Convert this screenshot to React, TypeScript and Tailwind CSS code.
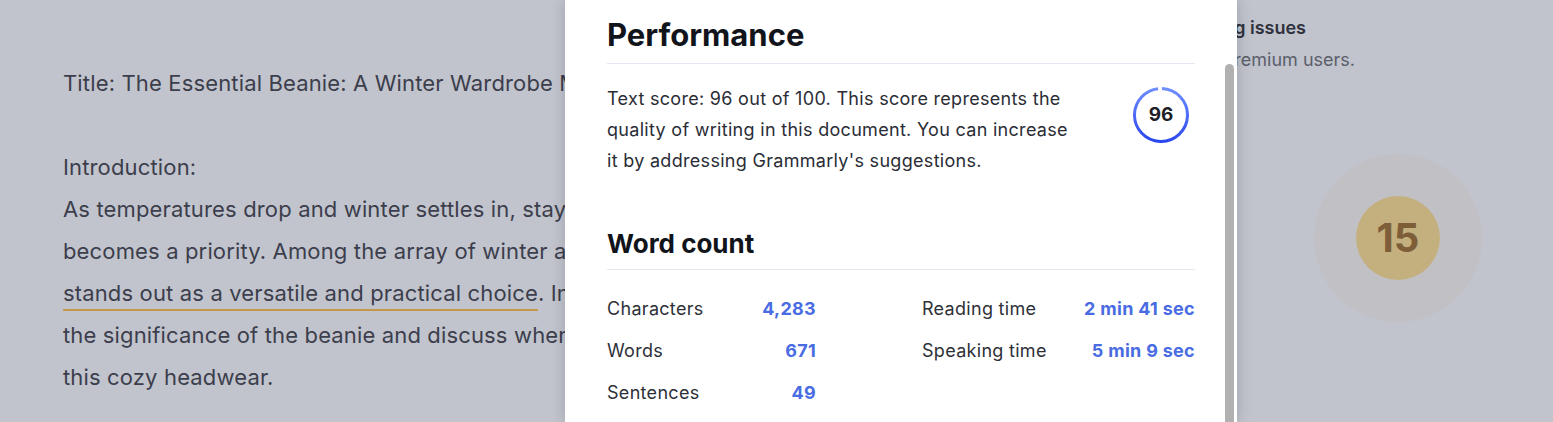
import React from "react";

const docLines = [
  "Title: The Essential Beanie: A Winter Wardrobe Must-Have",
  "",
  "Introduction:",
  "As temperatures drop and winter settles in, staying warm and stylish",
  "becomes a priority. Among the array of winter accessories, the beanie",
];

const ScoreRing: React.FC<{ score: number }> = ({ score }) => {
  const r = 26.5;
  const c = 2 * Math.PI * r;
  const len = c * 0.97;
  return (
    <div className="relative w-[56px] h-[56px] shrink-0">
      <svg width="56" height="56" viewBox="0 0 56 56" className="absolute inset-0">
        <defs>
          <linearGradient id="ring" x1="0" y1="0" x2="1" y2="0">
            <stop offset="0%" stopColor="#2a47ee" />
            <stop offset="100%" stopColor="#6f8eff" />
          </linearGradient>
        </defs>
        <circle
          cx="28"
          cy="28"
          r={r}
          fill="none"
          stroke="url(#ring)"
          strokeWidth="3"
          strokeDasharray={`${len} ${c}`}
          transform="rotate(-88 28 28)"
        />
      </svg>
      <div className="absolute inset-0 flex items-center justify-center text-[19px] font-bold text-[#1e1f28]">
        {score}
      </div>
    </div>
  );
};

const Stat: React.FC<{ label: string; value: string; w: string }> = ({ label, value, w }) => (
  <div className={`flex justify-between ${w}`}>
    <span className="text-[#2e3038]">{label}</span>
    <span className="font-bold text-[#4a6ce2]">{value}</span>
  </div>
);

const App: React.FC = () => {
  return (
    <div
      className="relative w-full h-[422px] overflow-hidden bg-[#c1c4cd]"
      style={{ fontFamily: "Inter, 'Noto Sans', sans-serif" }}
    >
      {/* page behind the overlay */}
      <div className="flex">
        <div className="w-[1140px] shrink-0 pl-[63px] pt-[62px] text-[22px] leading-[42px] tracking-[0.15px] text-[#3c3e4c] whitespace-nowrap">
          {docLines.map((l, i) => (
            <div key={i} className="h-[42px]">{l}</div>
          ))}
          <div>
            <span className="underline decoration-[#c4974a] decoration-2 underline-offset-[8px]">
              stands out as a versatile and practical choice
            </span>
            . In this article, we'll explore
          </div>
          <div>the significance of the beanie and discuss when and how to wear</div>
          <div>this cozy headwear.</div>
        </div>

        <div className="flex-1 pt-[12px] leading-[32px] text-[18px] whitespace-nowrap">
          <div className="w-[166px] flex justify-end font-semibold text-[#30323d]">
            Advanced writing issues
          </div>
          <div className="w-[215px] flex justify-end text-[#5b5e6b]">Available for Premium users.</div>
          <div className="ml-[174px] mt-[78px] w-[168px] h-[168px] rounded-full bg-[#c1c0c4] flex items-center justify-center">
            <div className="w-[84px] h-[84px] rounded-full bg-[#c4b07f] flex items-center justify-center text-[40px] font-bold text-[#7d5e38]">
              15
            </div>
          </div>
        </div>
      </div>

      {/* modal */}
      <div className="absolute left-[565px] top-0 w-[672px] h-[422px] bg-white shadow-[0_0_14px_rgba(0,0,0,0.18)]">
        <div className="px-[42px] pt-[17px]">
          <h2 className="text-[31px] leading-[36px] font-bold text-[#12141b] pb-[10px] border-b border-[#e6e7f0]">
            Performance
          </h2>
          <div className="flex justify-between mt-[19px]">
            <div className="text-[18px] leading-[31px] tracking-[0.3px] text-[#2b2d36] whitespace-nowrap">
              <div>Text score: 96 out of 100. This score represents the</div>
              <div>quality of writing in this document. You can increase</div>
              <div>it by addressing Grammarly's suggestions.</div>
            </div>
            <div className="mt-[4px] mr-[6px]">
              <ScoreRing score={96} />
            </div>
          </div>

          <h2 className="mt-[53px] text-[26px] leading-[30px] font-bold text-[#12141b] pb-[10px] border-b border-[#e6e7f0]">
            Word count
          </h2>
          <div className="mt-[18px] flex justify-between text-[18px] leading-[42px] tracking-[0.3px]">
            <div className="w-[209px]">
              <Stat label="Characters" value="4,283" w="w-[209px]" />
              <Stat label="Words" value="671" w="w-[209px]" />
              <Stat label="Sentences" value="49" w="w-[209px]" />
            </div>
            <div className="w-[273px]">
              <Stat label="Reading time" value="2 min 41 sec" w="w-[273px]" />
              <Stat label="Speaking time" value="5 min 9 sec" w="w-[273px]" />
            </div>
          </div>
        </div>

        {/* scrollbar thumb */}
        <div className="absolute right-[3px] top-[64px] bottom-0 w-[9px] rounded-t-full bg-[#b1b1b1]" />
      </div>
    </div>
  );
};

export default App;
